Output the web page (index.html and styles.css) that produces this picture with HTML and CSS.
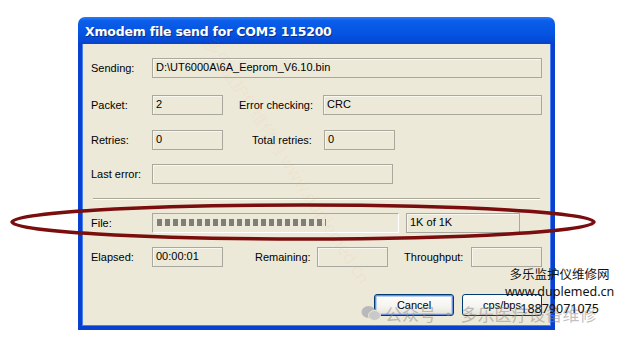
FILE: index.html
```html
<!DOCTYPE html>
<html lang="en">
<head>
    <meta charset="UTF-8">
    <meta name="viewport" content="width=device-width, initial-scale=1.0">
    <title>Xmodem file send</title>
    <link rel="stylesheet" href="styles.css">
</head>
<body>
    <div class="window">
        <div class="titlebar">Xmodem file send for COM3 115200</div>
        <div class="content">
            <div class="row row-sending">
                <span class="label">Sending:</span>
                <div class="field w-full">D:\UT6000A\6A_Eeprom_V6.10.bin</div>
            </div>
            <div class="row row-packet">
                <span class="label">Packet:</span>
                <div class="field w-small">2</div>
                <span class="label2 err-label">Error checking:</span>
                <div class="field w-crc">CRC</div>
            </div>
            <div class="row row-retries">
                <span class="label">Retries:</span>
                <div class="field w-small">0</div>
                <span class="label2 total-label">Total retries:</span>
                <div class="field w-small">0</div>
            </div>
            <div class="row row-error">
                <span class="label">Last error:</span>
                <div class="field w-error"></div>
            </div>
            <hr class="sep">
            <div class="row row-file">
                <span class="label">File:</span>
                <div class="field progress"><div class="blocks"></div></div>
                <div class="field w-count">1K of 1K</div>
            </div>
            <div class="row row-elapsed">
                <span class="label">Elapsed:</span>
                <div class="field w-small">00:00:01</div>
                <span class="label2 remain-label">Remaining:</span>
                <div class="field w-small"></div>
                <span class="label2 through-label">Throughput:</span>
                <div class="field w-small"></div>
            </div>
            <div class="buttons">
                <button class="btn btn-default">Cancel</button>
                <button class="btn">cps/bps</button>
            </div>
        </div>
    </div>

    <!-- overlays copied from the screenshot -->
    <div class="diag-mark">多乐监护仪维修网 www.duplemed.cn</div>
    <svg class="ring" width="635" height="342" viewBox="0 0 635 342">
        <ellipse cx="303" cy="222" rx="291" ry="17" fill="none" stroke="#7a0d0d" stroke-width="3.5"/>
    </svg>
    <div class="wx-mark">
        <svg width="20" height="17" viewBox="0 0 20 17">
            <ellipse cx="7.5" cy="7" rx="7" ry="6" fill="#b9b9b9"/>
            <ellipse cx="13.5" cy="10.5" rx="6" ry="5" fill="#c9c9c9" stroke="#ece9d8" stroke-width="1"/>
        </svg>
        <span>公众号 · 多乐医疗设备维修</span>
    </div>
    <div class="site-mark">
        <div>多乐监护仪维修网</div>
        <div>www.duplemed.cn</div>
        <div>18879071075</div>
    </div>
</body>
</html>
```

FILE: styles.css
```css
body {
    margin: 0;
    width: 635px;
    height: 342px;
    background: #fff;
    font-family: "Liberation Sans", Arial, sans-serif;
    font-size: 11px;
    color: #000;
    position: relative;
    overflow: hidden;
}
.window {
    margin: 17px 0 0 78px;
    width: 477px;
    height: 313px;
    display: flex;
    flex-direction: column;
}
.titlebar {
    height: 27px;
    box-sizing: border-box;
    padding: 7px 0 0 7px;
    border-radius: 7px 7px 0 0;
    background: linear-gradient(#2a7af8 0%, #0a5de9 15%, #0554e3 60%, #0549d6 90%, #0a3fbd 100%);
    color: #fff;
    font-family: "DejaVu Sans", sans-serif;
    font-weight: bold;
    font-size: 12.5px;
    letter-spacing: -0.2px;
    text-shadow: 1px 1px 0 #0a2f8a;
}
.content {
    flex: 1;
    background: #ece9d8;
    border: 4px solid #0841d0;
    border-top: 0;
    box-shadow: inset 1px 0 0 #4c7ef0, inset -1px 0 0 #4c7ef0, inset 0 -1px 0 #4c7ef0;
    padding: 14px 9px 0 9px;
}
.row {
    display: flex;
    align-items: center;
    height: 20px;
}
.label {
    width: 61px;
    flex: none;
}
.field {
    height: 20px;
    box-sizing: border-box;
    border: 1px solid #a9a89f;
    box-shadow: inset 1px 1px 0 #f7f6ef;
    padding: 2px 0 0 3px;
    flex: none;
    white-space: nowrap;
}
.w-full { width: 390px; }
.w-small { width: 71px; }
.w-crc { width: 219px; }
.w-error { width: 241px; }
.w-count { width: 114px; margin-left: 7px; }
.row-packet { margin-top: 17px; }
.row-retries { margin-top: 15px; }
.row-error { margin-top: 14px; }
.err-label { margin-left: 16px; width: 85px; }
.total-label { margin-left: 29px; width: 72px; }
.remain-label { margin-left: 32px; width: 64px; }
.through-label { margin-left: 16px; width: 69px; }
.sep {
    margin: 14px 2px 0 2px;
    height: 0;
    border: 0;
    border-top: 1px solid #aca899;
    border-bottom: 1px solid #fff;
}
.row-file { margin-top: 13px; }
.row-elapsed { margin-top: 14px; }
.progress {
    width: 247px;
    border-color: #a9a89f #fff #fff #a9a89f;
    box-shadow: none;
    padding: 5px 0 0 4px;
}
.blocks {
    width: 169px;
    height: 7px;
    background: repeating-linear-gradient(90deg, #7d7f78 0 5px, transparent 5px 8px);
}
.buttons {
    display: flex;
    justify-content: flex-end;
    gap: 8px;
    margin-top: 27px;
}
.btn {
    width: 80px;
    height: 22px;
    font-family: "Liberation Sans", Arial, sans-serif;
    font-size: 11px;
    color: #000;
    border: 1px solid #003c74;
    border-radius: 3px;
    background: linear-gradient(#ffffff 0%, #f4f3ee 60%, #e3e1d6 100%);
    padding: 0;
}
.btn-default {
    box-shadow: inset 0 0 0 1px #6d8fd9, inset 0 0 0 2px #bccff4;
}
.ring {
    position: absolute;
    left: 0;
    top: 0;
    pointer-events: none;
}
.diag-mark {
    position: absolute;
    left: 150px;
    top: 135px;
    transform: rotate(57deg);
    transform-origin: center;
    font-family: "Noto Sans CJK SC", sans-serif;
    font-size: 17px;
    color: rgba(238, 160, 110, 0.09);
    white-space: nowrap;
    width: 260px;
}
.wx-mark {
    position: absolute;
    left: 361px;
    top: 301px;
    display: flex;
    align-items: center;
    gap: 4px;
    font-family: "Noto Sans CJK SC", sans-serif;
    font-size: 17px;
    color: rgba(140, 140, 140, 0.55);
    white-space: nowrap;
}
.site-mark {
    position: absolute;
    left: 505px;
    top: 266px;
    font-family: "Noto Sans", "Noto Sans CJK SC", sans-serif;
    font-size: 12.5px;
    line-height: 17px;
    color: #111;
    text-align: center;
    white-space: nowrap;
}
```
